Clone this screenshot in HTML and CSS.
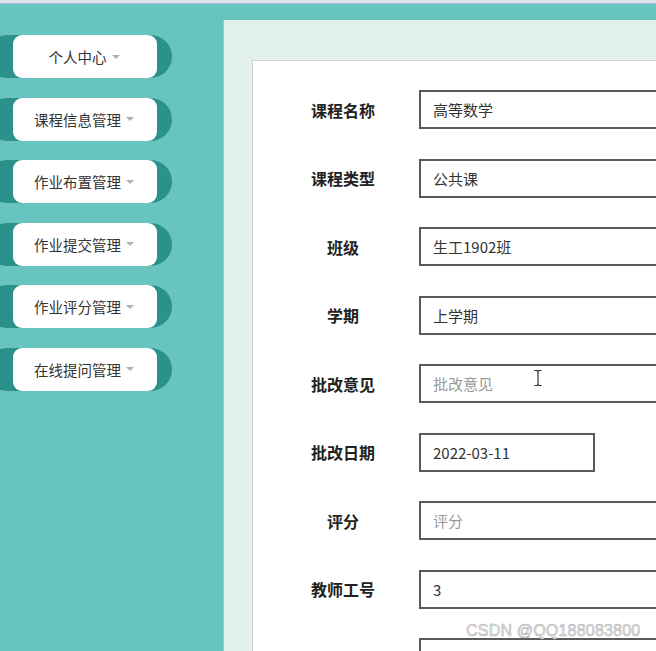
FILE: index.html
```html
<!DOCTYPE html>
<html lang="zh-CN">
<head>
<meta charset="utf-8">
<title>作业评分管理</title>
<link rel="stylesheet" href="styles.css">
</head>
<body>
<div class="topline"></div>
<div class="main">
  <nav class="sidebar">
    <div class="nav-item"><a class="nav-link">个人中心<span class="caret"></span></a></div>
    <div class="nav-item"><a class="nav-link">课程信息管理<span class="caret"></span></a></div>
    <div class="nav-item"><a class="nav-link">作业布置管理<span class="caret"></span></a></div>
    <div class="nav-item"><a class="nav-link">作业提交管理<span class="caret"></span></a></div>
    <div class="nav-item"><a class="nav-link">作业评分管理<span class="caret"></span></a></div>
    <div class="nav-item"><a class="nav-link">在线提问管理<span class="caret"></span></a></div>
  </nav>
  <section class="content">
    <form class="card">
      <div class="row"><label class="label">课程名称</label><div class="input">高等数学</div></div>
      <div class="row"><label class="label">课程类型</label><div class="input">公共课</div></div>
      <div class="row"><label class="label">班级</label><div class="input">生工1902班</div></div>
      <div class="row"><label class="label">学期</label><div class="input">上学期</div></div>
      <div class="row"><label class="label">批改意见</label><div class="input placeholder">批改意见</div></div>
      <div class="row"><label class="label">批改日期</label><div class="input short">2022-03-11</div></div>
      <div class="row"><label class="label">评分</label><div class="input placeholder">评分</div></div>
      <div class="row"><label class="label">教师工号</label><div class="input">3</div></div>
      <div class="row"><label class="label">教师姓名</label><div class="input">张三</div></div>
    </form>
  </section>
</div>
<svg class="cursor" width="10" height="18" viewBox="0 0 10 18"><path d="M1.5 1.5h2.5M6 1.5H8.5M5 2v14M1.5 16.5h2.5M6 16.5H8.5M4 1.5Q5 2 5 3M6 1.5Q5 2 5 3M4 16.5Q5 16 5 15M6 16.5Q5 16 5 15" fill="none" stroke="#222" stroke-width="1.1"/></svg>
<div class="watermark">CSDN @QQ188083800</div>
</body>
</html>
```

FILE: styles.css
```css
html, body {
  margin: 0;
  padding: 0;
  height: 651px;
  overflow: hidden;
}
body {
  font-family: "Noto Sans CJK SC", "Noto Sans", sans-serif;
  background: #68c4bf;
  position: relative;
}
.topline {
  height: 3px;
  background: #dfe3f0;
  border-bottom: 1px solid #a9b6d8;
}
.main {
  display: flex;
  height: 647px;
  background: #68c4bf;
}
.sidebar {
  width: 223px;
  flex: none;
  padding-top: 31px;
  display: flex;
  flex-direction: column;
  gap: 19.5px;
}
.nav-item {
  display: flex;
  box-sizing: border-box;
  width: 186px;
  height: 43px;
  margin-left: -14px;
  padding: 0 15px 0 27px;
  border-radius: 22px;
  background: #2b918b;
}
.nav-link {
  flex: 1;
  display: flex;
  align-items: center;
  justify-content: center;
  background: #fff;
  border-radius: 9px;
  font-size: 14.5px;
  color: #333;
  padding-right: 2px;
}
.caret {
  display: inline-block;
  width: 0;
  height: 0;
  margin-left: 5px;
  border-left: 4px solid transparent;
  border-right: 4px solid transparent;
  border-top: 4px solid #b0b0b0;
}
.content {
  flex: 1;
  min-width: 0;
  margin-top: 16px;
  background: #e2f0eb;
  border-left: 1px solid #9fc6c1;
  padding: 40px 0 0 28px;
  overflow: hidden;
}
.card {
  background: #fff;
  border: 1px solid #cfd3d2;
  border-right: none;
  height: 700px;
  padding-top: 29px;
  display: flex;
  flex-direction: column;
  gap: 29.5px;
}
.row {
  display: flex;
  align-items: center;
  height: 39px;
}
.label {
  flex: none;
  width: 140px;
  margin-left: 20px;
  margin-right: 6px;
  text-align: center;
  font-weight: bold;
  font-size: 16px;
  color: #222;
}
.input {
  flex: none;
  box-sizing: border-box;
  width: 300px;
  height: 39px;
  border: 2px solid #5a5a5a;
  padding-left: 12px;
  display: flex;
  align-items: center;
  font-size: 15px;
  color: #333;
  background: #fff;
}
.input.short {
  width: 176px;
}
.input.placeholder {
  color: #9a9a9a;
}
.cursor {
  position: absolute;
  left: 533px;
  top: 369px;
}
.watermark {
  position: absolute;
  left: 466px;
  top: 622px;
  font-family: "Liberation Sans", Arial, sans-serif;
  font-size: 16px;
  color: #ececec;
  -webkit-text-stroke: 0.5px #a6a6a6;
  letter-spacing: 0.2px;
}
```
